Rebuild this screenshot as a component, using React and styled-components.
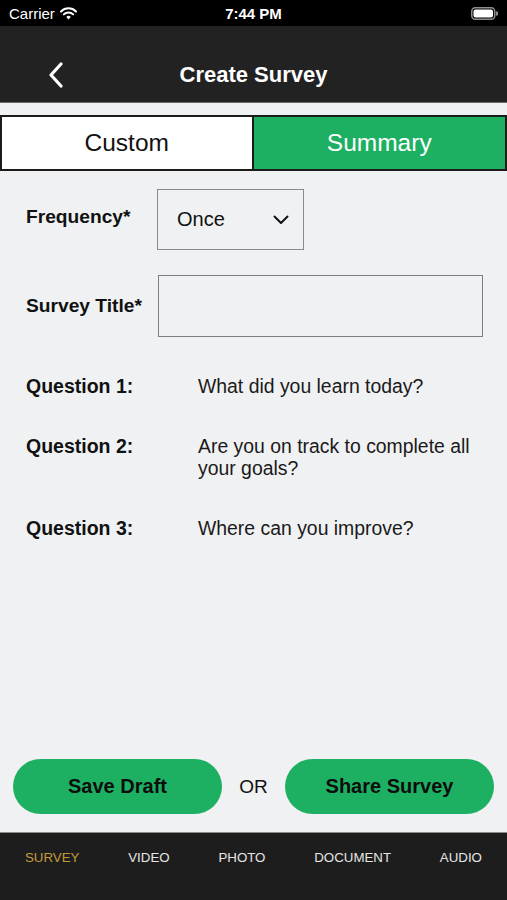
import React from "react";
import styled, { createGlobalStyle } from "styled-components";

const GlobalStyle = createGlobalStyle`
    html, body {
        margin: 0;
        padding: 0;
        background: #f0f1f3;
    }
    * {
        box-sizing: border-box;
    }
`;

const Screen = styled.div`
    width: 507px;
    height: 900px;
    display: flex;
    flex-direction: column;
    background: #f0f1f3;
    font-family: "Liberation Sans", Arial, sans-serif;
    color: #111;
    overflow: hidden;
`;

const StatusBar = styled.div`
    height: 26px;
    background: #000;
    color: #fff;
    display: grid;
    grid-template-columns: 1fr auto 1fr;
    align-items: center;
    padding: 0 9px;
    font-size: 15px;
`;

const Carrier = styled.div`
    display: flex;
    align-items: center;
    gap: 5px;
`;

const Clock = styled.div`
    font-weight: bold;
    font-size: 15px;
`;

const Battery = styled.div`
    justify-self: end;
    display: flex;
    align-items: center;
`;

const NavBar = styled.div`
    height: 77px;
    background: #222222;
    border-bottom: 1px solid #6a6a6a;
    display: grid;
    grid-template-columns: 100px 1fr 100px;
    align-items: center;
    padding-top: 22px;
`;

const BackButton = styled.button`
    background: none;
    border: none;
    padding: 0 0 0 47px;
    display: flex;
    align-items: center;
    cursor: pointer;
`;

const NavTitle = styled.h1`
    margin: 0;
    text-align: center;
    color: #fff;
    font-size: 22px;
    font-weight: bold;
`;

const Tabs = styled.div`
    margin-top: 12px;
    display: grid;
    grid-template-columns: 1fr 1fr;
    height: 56px;
`;

const Tab = styled.button`
    border: 2px solid #1b1b1b;
    border-left-width: ${(p) => (p.$first ? "2px" : "0")};
    background: ${(p) => (p.$active ? "#1eb062" : "#fff")};
    color: ${(p) => (p.$active ? "#fff" : "#111")};
    font-family: inherit;
    font-size: 24.5px;
    padding: 0;
    cursor: pointer;
`;

const Form = styled.div`
    padding: 18px 24px 0 26px;
    display: flex;
    flex-direction: column;
    flex: 1;
`;

const FieldRow = styled.div`
    display: flex;
    align-items: center;
    margin-bottom: ${(p) => p.$gap || "0"};
`;

const Label = styled.div`
    font-weight: bold;
    font-size: 19.2px;
    width: ${(p) => p.$width || "131px"};
    flex-shrink: 0;
    white-space: nowrap;
    align-self: ${(p) => (p.$top ? "flex-start" : "center")};
    padding-top: ${(p) => (p.$top ? "17px" : "0")};
`;

const Select = styled.div`
    width: 147px;
    height: 61px;
    border: 1px solid #8a8a8a;
    background: #f0f1f3;
    display: flex;
    align-items: center;
    justify-content: space-between;
    padding: 0 14px 0 19px;
    font-size: 20px;
    color: #111;
`;

const TextInput = styled.input`
    width: 325px;
    height: 62px;
    border: 1.5px solid #7f7f7f;
    background: #f0f1f3;
    font-family: inherit;
    font-size: 18px;
    outline: none;
`;

const QuestionList = styled.div`
    margin-top: 38px;
    display: flex;
    flex-direction: column;
    gap: 38px;
`;

const QuestionRow = styled.div`
    display: grid;
    grid-template-columns: 172px 1fr;
    align-items: start;
`;

const QuestionLabel = styled.div`
    font-weight: bold;
    font-size: 19.5px;
    line-height: 22px;
`;

const QuestionText = styled.div`
    font-size: 19.4px;
    line-height: 22px;
    color: #1a1a1a;
`;

const Actions = styled.div`
    margin-top: auto;
    display: flex;
    align-items: center;
    justify-content: space-between;
    padding: 0 13px 18px 13px;
`;

const PillButton = styled.button`
    width: 209px;
    height: 55px;
    border: none;
    border-radius: 28px;
    background: #1eb062;
    color: #0d0d0d;
    font-family: inherit;
    font-weight: bold;
    font-size: 20px;
    cursor: pointer;
`;

const Or = styled.span`
    font-size: 19px;
    color: #111;
`;

const TabBar = styled.nav`
    height: 68px;
    background: #1d1d1d;
    border-top: 1px solid #8a8a8a;
    display: flex;
    justify-content: space-between;
    padding: 16px 25px 0 25px;
`;

const TabItem = styled.span`
    font-size: 13.3px;
    line-height: 17px;
    color: ${(p) => (p.$active ? "#c29a3c" : "#e6e6e6")};
`;

const tabs = ["SURVEY", "VIDEO", "PHOTO", "DOCUMENT", "AUDIO"];

const questions = [
    ["Question 1:", "What did you learn today?"],
    ["Question 2:", "Are you on track to complete all your goals?"],
    ["Question 3:", "Where can you improve?"],
];

export default function App() {
    return (
        <Screen>
            <GlobalStyle />
            <StatusBar>
                <Carrier>
                    Carrier
                    <svg width="17" height="13" viewBox="0 0 17 13">
                        <path d="M1 4.5 A10.5 10.5 0 0 1 16 4.5" stroke="#fff" strokeWidth="2" fill="none" strokeLinecap="round" />
                        <path d="M3.8 7.4 A6.5 6.5 0 0 1 13.2 7.4" stroke="#fff" strokeWidth="2" fill="none" strokeLinecap="round" />
                        <path d="M6.3 10 L8.5 12.5 L10.7 10 A3 3 0 0 0 6.3 10 Z" fill="#fff" />
                    </svg>
                </Carrier>
                <Clock>7:44 PM</Clock>
                <Battery>
                    <svg width="27" height="13" viewBox="0 0 27 13">
                        <rect x="0.75" y="0.75" width="23" height="11.5" rx="3.5" stroke="#8e8e8e" strokeWidth="1.5" fill="none" />
                        <rect x="2.5" y="2.5" width="19.5" height="8" rx="2" fill="#fff" />
                        <path d="M25 4.3 A2 2 0 0 1 25 8.7 Z" fill="#8e8e8e" />
                    </svg>
                </Battery>
            </StatusBar>
            <NavBar>
                <BackButton aria-label="Back">
                    <svg width="18" height="26" viewBox="0 0 18 26">
                        <path d="M14 2 L4 13 L14 24" stroke="#fff" strokeWidth="3.2" fill="none" strokeLinecap="round" strokeLinejoin="round" />
                    </svg>
                </BackButton>
                <NavTitle>Create Survey</NavTitle>
                <div />
            </NavBar>
            <Tabs>
                <Tab $first>Custom</Tab>
                <Tab $active>Summary</Tab>
            </Tabs>
            <Form>
                <FieldRow $gap="25px">
                    <Label $top>Frequency*</Label>
                    <Select>
                        Once
                        <svg width="16" height="10" viewBox="0 0 16 10">
                            <path d="M1.5 1.5 L8 8 L14.5 1.5" stroke="#111" strokeWidth="2" fill="none" strokeLinecap="round" strokeLinejoin="round" />
                        </svg>
                    </Select>
                </FieldRow>
                <FieldRow>
                    <Label $width="132px">Survey Title*</Label>
                    <TextInput type="text" />
                </FieldRow>
                <QuestionList>
                    {questions.map(([label, text]) => (
                        <QuestionRow key={label}>
                            <QuestionLabel>{label}</QuestionLabel>
                            <QuestionText>{text}</QuestionText>
                        </QuestionRow>
                    ))}
                </QuestionList>
            </Form>
            <Actions>
                <PillButton>Save Draft</PillButton>
                <Or>OR</Or>
                <PillButton>Share Survey</PillButton>
            </Actions>
            <TabBar>
                {tabs.map((t, i) => (
                    <TabItem key={t} $active={i === 0}>
                        {t}
                    </TabItem>
                ))}
            </TabBar>
        </Screen>
    );
}
